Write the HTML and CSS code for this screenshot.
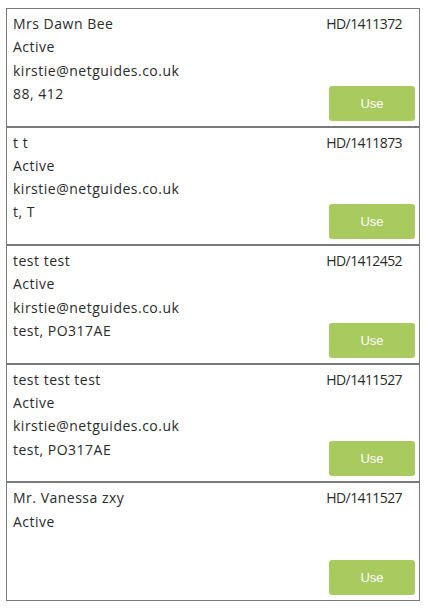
FILE: index.html
```html
<!DOCTYPE html>
<html>
<head>
<meta charset="utf-8">
<link rel="stylesheet" href="styles.css">
</head>
<body>
<div class="list">
  <div class="card">
    <div class="info">
      <div class="line">Mrs Dawn Bee</div>
      <div class="line">Active</div>
      <div class="line">kirstie@netguides.co.uk</div>
      <div class="line">88, 412</div>
    </div>
    <div class="side">
      <div class="ref">HD/1411372</div>
      <button class="use">Use</button>
    </div>
  </div>
  <div class="card">
    <div class="info">
      <div class="line">t t</div>
      <div class="line">Active</div>
      <div class="line">kirstie@netguides.co.uk</div>
      <div class="line">t, T</div>
    </div>
    <div class="side">
      <div class="ref">HD/1411873</div>
      <button class="use">Use</button>
    </div>
  </div>
  <div class="card">
    <div class="info">
      <div class="line">test test</div>
      <div class="line">Active</div>
      <div class="line">kirstie@netguides.co.uk</div>
      <div class="line">test, PO317AE</div>
    </div>
    <div class="side">
      <div class="ref">HD/1412452</div>
      <button class="use">Use</button>
    </div>
  </div>
  <div class="card">
    <div class="info">
      <div class="line">test test test</div>
      <div class="line">Active</div>
      <div class="line">kirstie@netguides.co.uk</div>
      <div class="line">test, PO317AE</div>
    </div>
    <div class="side">
      <div class="ref">HD/1411527</div>
      <button class="use">Use</button>
    </div>
  </div>
  <div class="card">
    <div class="info">
      <div class="line">Mr. Vanessa zxy</div>
      <div class="line">Active</div>
    </div>
    <div class="side">
      <div class="ref">HD/1411527</div>
      <button class="use">Use</button>
    </div>
  </div>
</div>
</body>
</html>
```

FILE: styles.css
```css
html, body {
  margin: 0;
  padding: 0;
  background: #ffffff;
}
body {
  font-family: "Open Sans", "Liberation Sans", sans-serif;
  font-size: 14px;
  color: #2b2b2b;
}
.list {
  margin: 8px 0 0 6px;
  width: 414px;
}
.card {
  box-sizing: border-box;
  height: 118.6px;
  border: 1px solid #7a7a7a;
  display: flex;
  justify-content: space-between;
  padding: 3px 4px 5px 6px;
}
.info {
  display: flex;
  flex-direction: column;
}
.line {
  line-height: 23.3px;
  letter-spacing: 0.5px;
  white-space: nowrap;
}
.side {
  display: flex;
  flex-direction: column;
  justify-content: space-between;
  align-items: flex-end;
}
.ref {
  line-height: 23.3px;
  letter-spacing: -0.6px;
  margin-right: 13px;
}
.use {
  width: 86px;
  height: 35px;
  border: none;
  border-radius: 3px;
  background: #a8ca5e;
  color: #ffffff;
  font-family: "Liberation Sans", Arial, sans-serif;
  font-size: 13px;
  padding: 0;
}
```
